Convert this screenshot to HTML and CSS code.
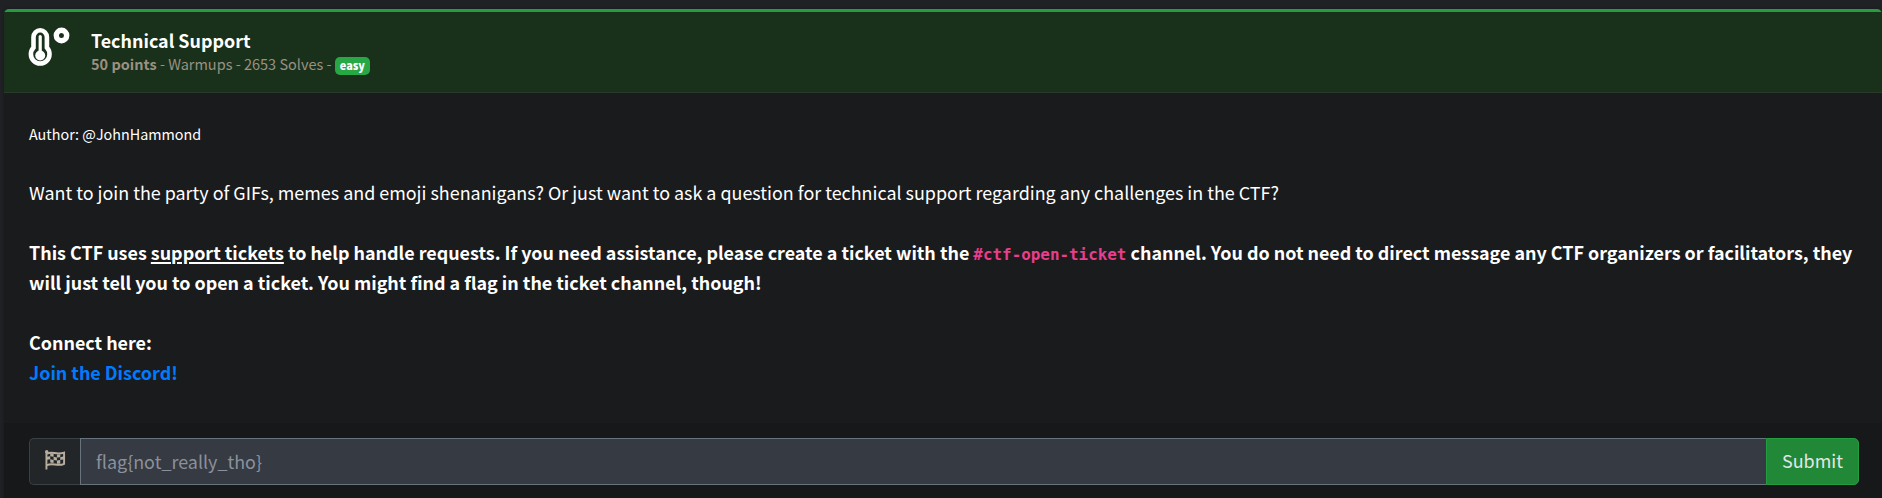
FILE: index.html
```html
<!DOCTYPE html>
<html lang="en">
<head>
<meta charset="utf-8">
<title>Technical Support</title>
<link rel="stylesheet" href="styles.css">
</head>
<body>
<article class="card">
  <header class="card-header">
    <svg class="thermo" viewBox="0 0 42 42" aria-hidden="true">
      <path class="tube" d="M5.500 10A6.700 6.700 0 0 1 18.900 10V20.600A9.300 9.400 0 1 1 5.500 20.600Z"/>
      <path class="mercury" d="M12.200 9.500V26"/>
      <circle cx="12.200" cy="28.500" r="5"/>
      <circle class="ring" cx="33.500" cy="8.500" r="5.200"/>
    </svg>
    <div class="heading">
      <h1 class="title">Technical Support</h1>
      <p class="meta"><b>50 points</b> - Warmups - 2653 Solves - <span class="badge">easy</span></p>
    </div>
  </header>
  <section class="card-body">
    <p class="author">Author: @JohnHammond</p>
    <p class="intro">Want to join the party of GIFs, memes and emoji shenanigans? Or just want to ask a question for technical support regarding any challenges in the CTF?</p>
    <p class="notice">This CTF uses <u>support tickets</u> to help handle requests. If you need assistance, please create a ticket with the <code>#ctf-open-ticket</code> channel. You do not need to direct message any CTF organizers or facilitators, they<br>will just tell you to open a ticket. You might find a flag in the ticket channel, though!</p>
    <p class="notice">Connect here:<br><a class="link" href="#">Join the Discord!</a></p>
  </section>
  <footer class="card-footer">
    <form class="input-group">
      <span class="prepend">
        <svg class="flag" viewBox="0 0 22 22" aria-hidden="true">
          <path d="M1.500 1.500V20.500M2 4C7 .8 12 5.500 20 2.700V14.500C13 18 8 12.500 2 16" fill="none" stroke="currentColor" stroke-width="2"/>
          <circle cx="1.800" cy="1.900" r="1.800"/>
          <path d="M5.500 3.500L9 4V7.200L5.500 6.500ZM12.500 4.700L16 4.500V7.500L12.500 7.900ZM2 7L5.500 6.500V9.800L2 10.300ZM9 7.200L12.500 7.900V11L9 10.400ZM16 7.500L20 6.500V9.800L16 10.600ZM5.500 9.800L9 10.400V13.600L5.500 13.200ZM12.500 11L16 10.600V14.500L12.500 14.300Z"/>
        </svg>
      </span>
      <input class="answer" type="text" placeholder="flag{not_really_tho}" aria-label="Flag">
      <button class="submit" type="button">Submit</button>
    </form>
  </footer>
</article>
</body>
</html>
```
FILE: styles.css
```css
* { box-sizing: border-box; }
body {
  margin: 0;
  height: 498px;
  overflow: hidden;
  padding: 9px 0 0 4px;
  background: #1f2124;
  color: #fff;
  font-family: "Noto Sans CJK SC", sans-serif;
}
h1, p { margin: 0; }
.card {
  height: 489px;
  display: flex;
  flex-direction: column;
  background: #1a1b1d;
  border-top: 3px solid #249c40;
  border-radius: 5px 5px 0 0;
  box-shadow: 0 0 3px rgba(0, 0, 0, .35);
}
.card-header {
  height: 81px;
  flex: none;
  display: flex;
  padding: 15px 24px 0;
  background: #19301a;
  border-bottom: 1px solid #293c2b;
}
.thermo { width: 42px; height: 42px; fill: #fff; overflow: visible; }
.tube { fill: none; stroke: #fff; stroke-width: 4.600; }
.mercury { fill: none; stroke: #fff; stroke-width: 3.200; stroke-linecap: round; }
.ring { fill: none; stroke: #fff; stroke-width: 5.400; }
.heading { margin-left: 21px; padding-top: 1px; }
.title { font-size: 17.900px; line-height: 24px; font-weight: 700; white-space: nowrap; }
.meta { display: flex; margin-top: 1px; font-size: 14.500px; line-height: 22px; color: #9a9184; white-space: pre; }
.badge {
  height: 18px;
  margin-top: 4px;
  padding: 0 5px;
  border-radius: 5px;
  background: #28a745;
  color: #fff;
  font-size: 10.900px;
  line-height: 17px;
  font-weight: 900;
}
.card-body { padding: 27px 24px 0 25px; flex: 1; }
.author { font-size: 14.350px; line-height: 28px; margin-bottom: 29px; }
.intro, .notice { font-size: 17.910px; line-height: 30px; margin-bottom: 30px; white-space: nowrap; }
.notice { font-weight: 700; }
.notice u { text-decoration-thickness: 2px; text-underline-offset: 2px; }
code { font-family: "DejaVu Sans Mono", monospace; font-size: 15.900px; line-height: 1; color: #e83e8c; }
.link { color: #007bff; text-decoration: none; }
.card-footer { height: 75px; padding: 15px 23px 0 25px; background: #171819; }
.input-group { display: flex; height: 47px; }
.prepend {
  width: 51px;
  display: flex;
  padding: 11px 0 0 15px;
  background: #222628;
  border: 1px solid #3b4044;
  border-right: 0;
  border-radius: 5px 0 0 5px;
}
.flag { width: 21px; height: 21px; fill: #b8ae9f; color: #b8ae9f; }
.answer {
  flex: 1;
  min-width: 0;
  padding: 0 15px 1px;
  border: 1px solid #69737c;
  border-right: 0;
  background: #363a42;
  font: 17.930px "Noto Sans CJK SC", sans-serif;
}
.answer::placeholder { color: #8a919c; }
.submit {
  width: 93px;
  padding: 0 0 3px;
  border: 1px solid #249c40;
  border-radius: 0 5px 5px 0;
  background: #218838;
  color: #e4e6e4;
  font: 17.930px "Noto Sans CJK SC", sans-serif;
}
```
